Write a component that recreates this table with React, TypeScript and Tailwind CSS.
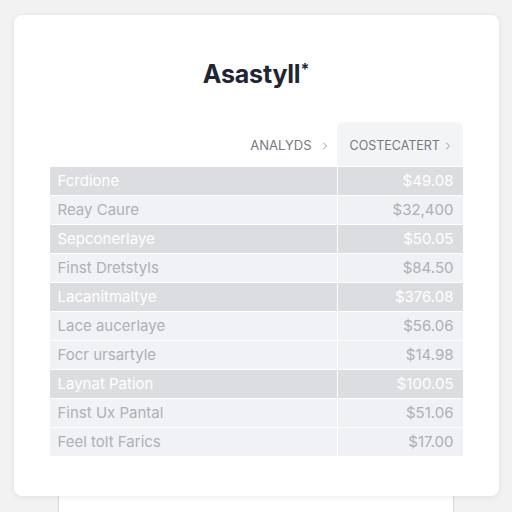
import { ChevronRight } from "lucide-react";

const rows = [
  { name: "Fcrdione", price: "$49.08", dark: true },
  { name: "Reay Caure", price: "$32,400", dark: false },
  { name: "Sepconerlaye", price: "$50.05", dark: true },
  { name: "Finst Dretstyls", price: "$84.50", dark: false },
  { name: "Lacanitmaltye", price: "$376.08", dark: true },
  { name: "Lace aucerlaye", price: "$56.06", dark: false },
  { name: "Focr ursartyle", price: "$14.98", dark: false },
  { name: "Laynat Pation", price: "$100.05", dark: true },
  { name: "Finst Ux Pantal", price: "$51.06", dark: false },
  { name: "Feel tolt Farics", price: "$17.00", dark: false },
];

export default function App() {
  return (
    <div
      className="w-[512px] h-[512px] overflow-hidden bg-[#f2f2f3] flex flex-col items-center"
      style={{ fontFamily: "Inter, 'Liberation Sans', sans-serif" }}
    >
      <div className="mt-[15px] w-[485px] h-[481px] shrink-0 bg-white rounded-lg shadow-[0_1px_6px_rgba(0,0,0,0.08)] px-9 pt-[43px] relative z-10">
        <h1 className="text-center text-[25px] leading-[32px] font-bold text-[#1f2533] tracking-[-0.2px]">
          Asastyll<sup className="text-[16px] font-bold -top-[8px]">*</sup>
        </h1>

        <div className="mt-[32px] grid grid-cols-[287px_126px] h-[44px]">
          <div className="flex items-center justify-end gap-[7px] pr-[6px] pt-[4px] text-[13px] text-[#747980]">
            ANALYDS
            <ChevronRight size={12} strokeWidth={1.5} />
          </div>
          <div className="flex items-center justify-between bg-[#f3f4f6] rounded-t-md pl-[13px] pr-[9px] pt-[4px] text-[12.5px] text-[#747980] overflow-hidden">
            COSTECATERT
            <ChevronRight size={12} strokeWidth={1.5} />
          </div>
        </div>

        <div className="flex flex-col">
          {rows.map((r) => (
            <div
              key={r.name}
              className={`grid grid-cols-[287px_126px] h-[29px] border-t border-white text-[15px] ${
                r.dark ? "bg-[#dcdde0] text-white" : "bg-[#f1f2f5] text-[#adb0b6]"
              }`}
            >
              <div className="flex items-center pl-[8px]">{r.name}</div>
              <div
                className={`flex items-center justify-end pr-[9px] border-l border-white ${
                  r.dark ? "bg-[#dcdde0]" : "bg-[#eff1f4]"
                }`}
              >
                {r.price}
              </div>
            </div>
          ))}
        </div>
      </div>
      <div className="w-[396px] flex-1 bg-white border-x border-[#d8d9dc]" />
    </div>
  );
}
